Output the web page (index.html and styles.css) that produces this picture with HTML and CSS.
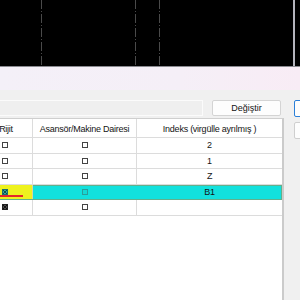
FILE: index.html
```html
<!DOCTYPE html>
<html>
<head>
<meta charset="utf-8">
<link rel="stylesheet" href="styles.css">
</head>
<body>
<div class="screen">
  <div class="canvas">
    <div class="guide" style="left:41px"></div>
    <div class="guide" style="left:135px"></div>
    <div class="guide" style="left:159px"></div>
    <div class="edge"></div>
  </div>
  <div class="band"></div>
  <div class="panel">
    <div class="main">
      <div class="toolbar">
        <div class="textbox"></div>
        <button class="btn">Değiştir</button>
      </div>
      <div class="table">
        <div class="row head">
          <div class="cell first">Rijit</div>
          <div class="cell">Asansör/Makine Dairesi</div>
          <div class="cell last">Indeks (virgülle ayrılmış )</div>
        </div>
        <div class="row">
          <div class="cell"><svg class="cb" viewBox="0 0 6 6"><rect x="0.5" y="0.5" width="5" height="5" fill="#fff" stroke="#444"/></svg></div>
          <div class="cell"><svg class="cb" viewBox="0 0 6 6"><rect x="0.5" y="0.5" width="5" height="5" fill="#fff" stroke="#444"/></svg></div>
          <div class="cell last">2</div>
        </div>
        <div class="row">
          <div class="cell"><svg class="cb" viewBox="0 0 6 6"><rect x="0.5" y="0.5" width="5" height="5" fill="#fff" stroke="#444"/></svg></div>
          <div class="cell"><svg class="cb" viewBox="0 0 6 6"><rect x="0.5" y="0.5" width="5" height="5" fill="#fff" stroke="#444"/></svg></div>
          <div class="cell last">1</div>
        </div>
        <div class="row">
          <div class="cell"><svg class="cb" viewBox="0 0 6 6"><rect x="0.5" y="0.5" width="5" height="5" fill="#fff" stroke="#444"/></svg></div>
          <div class="cell"><svg class="cb" viewBox="0 0 6 6"><rect x="0.5" y="0.5" width="5" height="5" fill="#fff" stroke="#444"/></svg></div>
          <div class="cell last">Z</div>
        </div>
        <div class="row selected">
          <div class="cell current"><svg class="cb" viewBox="0 0 6 6"><rect x="0.5" y="0.5" width="5" height="5" fill="#3aa79a" stroke="#1d6f6a"/><path d="M1 1L5 5M5 1L1 5" stroke="#0f4f4c" stroke-width="1"/></svg><span class="err"></span></div>
          <div class="cell"><svg class="cb" viewBox="0 0 6 6"><rect x="0.5" y="0.5" width="5" height="5" fill="#14d8d4" stroke="#2a9e9a"/></svg></div>
          <div class="cell last">B1</div>
        </div>
        <div class="row">
          <div class="cell"><svg class="cb" viewBox="0 0 6 6"><rect x="0.5" y="0.5" width="5" height="5" fill="#777" stroke="#222"/><path d="M1 1L5 5M5 1L1 5" stroke="#111" stroke-width="1.2"/></svg></div>
          <div class="cell"><svg class="cb" viewBox="0 0 6 6"><rect x="0.5" y="0.5" width="5" height="5" fill="#fff" stroke="#444"/></svg></div>
          <div class="cell last"></div>
        </div>
      </div>
    </div>
    <div class="side">
      <button class="sbtn primary"></button>
      <button class="sbtn"></button>
    </div>
  </div>
</div>
</body>
</html>
```

FILE: styles.css
```css
* { box-sizing: border-box; }
html, body { margin: 0; padding: 0; }
body {
  width: 300px;
  height: 300px;
  overflow: hidden;
  background: #f0f0f0;
  font-family: "Liberation Sans", Arial, sans-serif;
  font-size: 9px;
  letter-spacing: -0.25px;
  color: #141414;
}
.screen { width: 300px; height: 300px; overflow: hidden; display: flex; flex-direction: column; }
.canvas {
  position: relative;
  height: 67px;
  background: #000;
  border-bottom: 1px solid #8a8a90;
  flex: none;
}
.guide {
  position: absolute;
  top: 0;
  width: 1px;
  height: 66px;
  background: repeating-linear-gradient(to bottom, #4a4a4a 0 9px, transparent 9px 11px, #4a4a4a 11px 12px, transparent 12px 14px);
}
.edge {
  position: absolute;
  top: 0;
  left: 293px;
  width: 2px;
  height: 66px;
  background: #b4b4bc;
}
.band {
  height: 23px;
  flex: none;
  background: linear-gradient(to right, #f4f0f8, #f5eff7 60%, #f8ecf5);
}
.panel {
  flex: 1;
  display: flex;
  gap: 10px;
  padding-top: 10px;
  min-height: 0;
}
.main {
  margin-left: -22px;
  width: 306px;
  flex: none;
  display: flex;
  flex-direction: column;
}
.toolbar {
  display: flex;
  gap: 9px;
  height: 16px;
  flex: none;
}
.textbox {
  width: 225px;
  height: 16px;
  border: 1px solid #fbfbfb;
  background: #efefef;
}
.btn {
  width: 69px;
  height: 16px;
  margin: 0;
  padding: 0;
  border: 1px solid #d4d4d4;
  border-radius: 2px;
  background: #fdfdfd;
  font: inherit;
  color: #141414;
  line-height: 13px;
}
.table {
  margin-top: 2px;
  flex: 1;
  background: #fff;
  border-top: 1px solid #cfcfcf;
  border-right: 2px solid #cbcbcb;
}
.row {
  display: grid;
  grid-template-columns: 55px 104px 1fr;
  height: 15.5px;
  border-bottom: 1px solid #dcdcdc;
}
.row.head { height: 19px; }
.row.head .cell { padding-top: 2px; }
.row.head .cell.first { padding-left: 2px; }
.cell {
  display: flex;
  align-items: center;
  justify-content: center;
  border-right: 1px solid #dcdcdc;
  position: relative;
}
.cell.last { border-right: none; }
.cb { width: 6px; height: 6px; display: block; }
.row.selected {
  background: #12e1dd;
  outline: 1px solid #62b08c;
  outline-offset: -1px;
  border-bottom-color: #62b08c;
}
.row.selected .cell { border-right-color: transparent; }
.cell.current {
  background: #eef21e;
  border-right: 1px solid #d6d6a0 !important;
}
.err {
  position: absolute;
  left: 22px;
  bottom: 2px;
  width: 23px;
  height: 2px;
  background: #e4262a;
}
.side {
  display: flex;
  flex-direction: column;
  gap: 5px;
}
.sbtn {
  width: 20px;
  height: 17px;
  margin: 0;
  padding: 0;
  background: #fdfdfd;
  border: 1px solid #cfcfcf;
  border-radius: 2px;
}
.sbtn.primary { border-color: #2b7fd8; }
```
